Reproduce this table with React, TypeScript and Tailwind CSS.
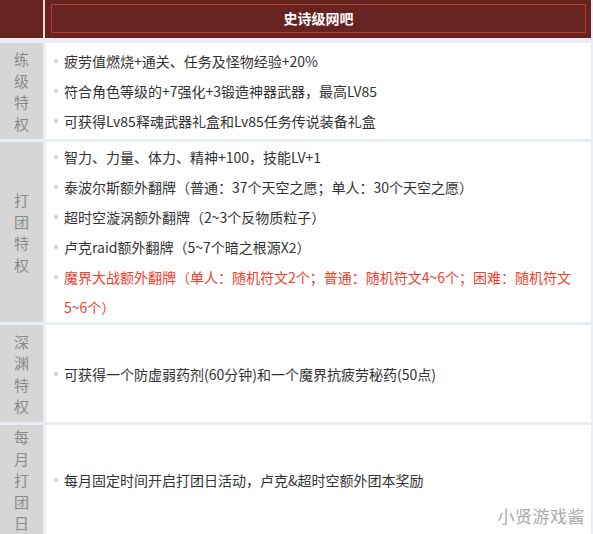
const font = { fontFamily: '"Noto Sans CJK SC", "Noto Sans", sans-serif' };

interface Item {
  text: string;
  red?: boolean;
}

interface Section {
  label: string;
  height: string;
  items: Item[];
}

const sections: Section[] = [
  {
    label: '练级特权',
    height: 'h-[96px]',
    items: [
      { text: '疲劳值燃烧+通关、任务及怪物经验+20%' },
      { text: '符合角色等级的+7强化+3锻造神器武器，最高LV85' },
      { text: '可获得Lv85释魂武器礼盒和Lv85任务传说装备礼盒' },
    ],
  },
  {
    label: '打团特权',
    height: 'h-[180px]',
    items: [
      { text: '智力、力量、体力、精神+100，技能LV+1' },
      { text: '泰波尔斯额外翻牌（普通：37个天空之愿；单人：30个天空之愿）' },
      { text: '超时空漩涡额外翻牌（2~3个反物质粒子）' },
      { text: '卢克raid额外翻牌（5~7个暗之根源X2）' },
      { text: '魔界大战额外翻牌（单人：随机符文2个；普通：随机符文4~6个；困难：随机符文5~6个）', red: true },
    ],
  },
  {
    label: '深渊特权',
    height: 'h-[97px]',
    items: [{ text: '可获得一个防虚弱药剂(60分钟)和一个魔界抗疲劳秘药(50点)' }],
  },
  {
    label: '每月打团日',
    height: 'h-[110px]',
    items: [{ text: '每月固定时间开启打团日活动，卢克&超时空额外团本奖励' }],
  },
];

function Row({ section }: { section: Section }) {
  return (
    <div className={`flex gap-[3px] ${section.height}`}>
      <div className="w-[43px] shrink-0 bg-[#d6d6d6] bg-[radial-gradient(#cdcdcd_0.5px,transparent_0.7px)] bg-[size:4px_4px] flex flex-col items-center justify-center text-[15px] leading-[21.5px] text-[#8a8a8a]">
        {section.label.split('').map((ch, i) => (
          <span key={i}>{ch}</span>
        ))}
      </div>
      <div className="flex-1 bg-white flex flex-col justify-center pl-[8px] pr-[14px]">
        {section.items.map((item, i) => (
          <div key={i} className="flex items-start">
            <span className="mt-[13px] mr-[6px] w-[4px] h-[4px] rounded-full bg-[#cfcfcf] shrink-0" />
            <p className={`text-[14px] leading-[30px] ${item.red ? 'text-[#f3402c]' : 'text-[#333333]'}`}>
              {item.text}
            </p>
          </div>
        ))}
      </div>
    </div>
  );
}

export default function App() {
  return (
    <div className="relative w-[593px] h-[534px] overflow-hidden bg-[#e9edf5] pr-[2px]" style={font}>
      <div className="flex h-[38px]">
        <div className="w-[43px] bg-[#67231f]" />
        <div className="w-[2px] bg-[#eee2c2]" />
        <div className="flex-1 bg-[#67231f] pt-[4px] pb-[5px] pl-[6px] pr-[5px]">
          <div className="h-full border border-[#b53a30] flex items-center justify-center text-white text-[14px] font-bold">
            史诗级网吧
          </div>
        </div>
      </div>
      <div className="mt-[5px] flex flex-col gap-[3px]">
        {sections.map((s) => (
          <Row key={s.label} section={s} />
        ))}
      </div>
      <div className="absolute right-[8px] bottom-[6px] text-[17px] tracking-[0.5px] text-[#ababab] [text-shadow:0_0_1px_#ffffff,1px_1px_1px_#ffffff,-1px_-1px_1px_#ffffff]">
        小贤游戏酱
      </div>
    </div>
  );
}
